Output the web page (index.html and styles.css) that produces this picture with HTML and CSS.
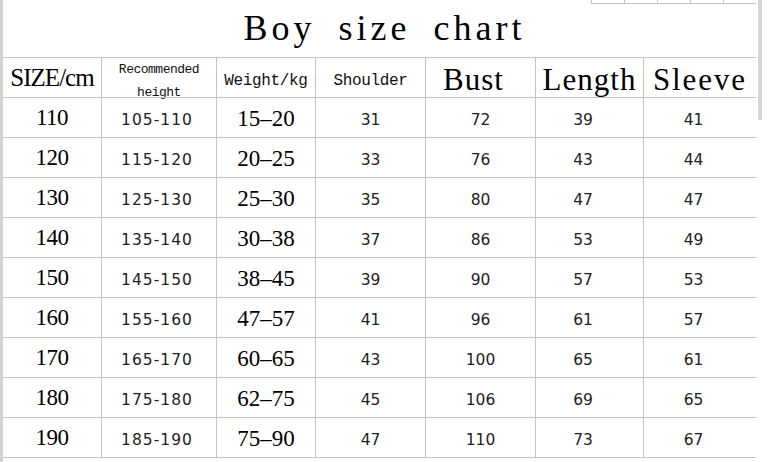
FILE: index.html
```html
<!DOCTYPE html>
<html lang="en">
<head>
<meta charset="utf-8">
<title>Boy size chart</title>
<link rel="stylesheet" href="styles.css">
</head>
<body>
<div class="page">
  <div class="bar-left"></div>
  <div class="sheet">
    <div class="head">
      <div class="mini">
        <span class="mini-cell"></span><span class="mini-cell"></span><span class="mini-cell"></span><span class="mini-cell"></span><span class="mini-cell"></span>
      </div>
      <h1 class="title">Boy size chart</h1>
    </div>
    <div class="grid">
      <div class="cell h h-size">SIZE/cm</div>
      <div class="cell h h-rec">Recommended<br>height</div>
      <div class="cell h h-mono">Weight/kg</div>
      <div class="cell h h-mono">Shoulder</div>
      <div class="cell h h-big h-bust">Bust</div>
      <div class="cell h h-big h-len">Length</div>
      <div class="cell h h-big h-sl">Sleeve</div>

      <div class="cell c1">110</div><div class="cell c2">105-110</div><div class="cell c3">15–20</div><div class="cell cn">31</div><div class="cell cn">72</div><div class="cell cn cr">39</div><div class="cell cn cr">41</div>
      <div class="cell c1">120</div><div class="cell c2">115-120</div><div class="cell c3">20–25</div><div class="cell cn">33</div><div class="cell cn">76</div><div class="cell cn cr">43</div><div class="cell cn cr">44</div>
      <div class="cell c1">130</div><div class="cell c2">125-130</div><div class="cell c3">25–30</div><div class="cell cn">35</div><div class="cell cn">80</div><div class="cell cn cr">47</div><div class="cell cn cr">47</div>
      <div class="cell c1">140</div><div class="cell c2">135-140</div><div class="cell c3">30–38</div><div class="cell cn">37</div><div class="cell cn">86</div><div class="cell cn cr">53</div><div class="cell cn cr">49</div>
      <div class="cell c1">150</div><div class="cell c2">145-150</div><div class="cell c3">38–45</div><div class="cell cn">39</div><div class="cell cn">90</div><div class="cell cn cr">57</div><div class="cell cn cr">53</div>
      <div class="cell c1">160</div><div class="cell c2">155-160</div><div class="cell c3">47–57</div><div class="cell cn">41</div><div class="cell cn">96</div><div class="cell cn cr">61</div><div class="cell cn cr">57</div>
      <div class="cell c1">170</div><div class="cell c2">165-170</div><div class="cell c3">60–65</div><div class="cell cn">43</div><div class="cell cn">100</div><div class="cell cn cr">65</div><div class="cell cn cr">61</div>
      <div class="cell c1">180</div><div class="cell c2">175-180</div><div class="cell c3">62–75</div><div class="cell cn">45</div><div class="cell cn">106</div><div class="cell cn cr">69</div><div class="cell cn cr">65</div>
      <div class="cell c1">190</div><div class="cell c2">185-190</div><div class="cell c3">75–90</div><div class="cell cn">47</div><div class="cell cn">110</div><div class="cell cn cr">73</div><div class="cell cn cr">67</div>
    </div>
  </div>
  <div class="bar-right"></div>
</div>
</body>
</html>
```

FILE: styles.css
```css
html, body {
  margin: 0;
  padding: 0;
  background: #ffffff;
}

.page {
  display: flex;
  width: 767px;
  height: 462px;
  overflow: hidden;
}

.bar-left {
  width: 3px;
  background: #d3d3d3;
  flex: none;
}

.sheet {
  width: 753px;
  flex: none;
}

.bar-right {
  width: 4px;
  height: 120px;
  margin-left: 2px;
  background: #d6d6d6;
  flex: none;
}

.head {
  height: 57px;
  display: flex;
  flex-direction: column;
}

.mini {
  display: flex;
  justify-content: flex-end;
  height: 4px;
}

.mini-cell {
  width: 32px;
  height: 3px;
  border-left: 1px solid #c4c4c4;
  border-bottom: 1px solid #c4c4c4;
}

.title {
  margin: 6px 0 0;
  padding-left: 10px;
  font-family: "Liberation Serif", serif;
  font-weight: normal;
  font-size: 36px;
  line-height: 36px;
  letter-spacing: 4px;
  word-spacing: 10px;
  text-align: center;
  color: #000;
}

.grid {
  display: grid;
  grid-template-columns: 98px 115px 99px 110px 110px 108px 113px;
  border-bottom: 1px solid #c4c4c4;
}

.cell {
  box-sizing: border-box;
  height: 40px;
  border-top: 1px solid #c4c4c4;
  border-left: 1px solid #c4c4c4;
  display: flex;
  align-items: center;
  justify-content: center;
  color: #000;
  white-space: nowrap;
}

.cell:nth-child(7n+1) {
  border-left: none;
}

/* header */
.h-size {
  font-family: "Liberation Serif", serif;
  font-size: 25px;
  letter-spacing: -1px;
}

.h-rec {
  align-items: flex-start;
  text-align: center;
  font-family: "Liberation Mono", monospace;
  font-size: 13px;
  line-height: 23px;
  letter-spacing: -0.5px;
  color: #111;
}

.h-mono {
  font-family: "Liberation Mono", monospace;
  font-size: 16px;
  letter-spacing: -0.35px;
  padding-top: 6px;
  color: #111;
}

.h-big {
  font-family: "Liberation Serif", serif;
  font-size: 31px;
  letter-spacing: 1px;
  padding-top: 4px;
}

.h-bust {
  padding-right: 14px;
}

.h-sl {
  letter-spacing: 1.9px;
}

/* data */
.c1 {
  font-family: "Liberation Serif", serif;
  font-size: 23px;
  letter-spacing: -0.5px;
}

.c2 {
  font-family: "DejaVu Sans", sans-serif;
  font-size: 15.5px;
  letter-spacing: 1px;
  padding-top: 4px;
  padding-right: 4px;
  color: #222;
}

.c3 {
  font-family: "Liberation Serif", serif;
  font-size: 23px;
  padding-top: 2px;
}

.cn {
  font-family: "DejaVu Sans", sans-serif;
  font-size: 15.5px;
  padding-top: 4px;
  color: #222;
}

.cr {
  padding-right: 13px;
}
```
